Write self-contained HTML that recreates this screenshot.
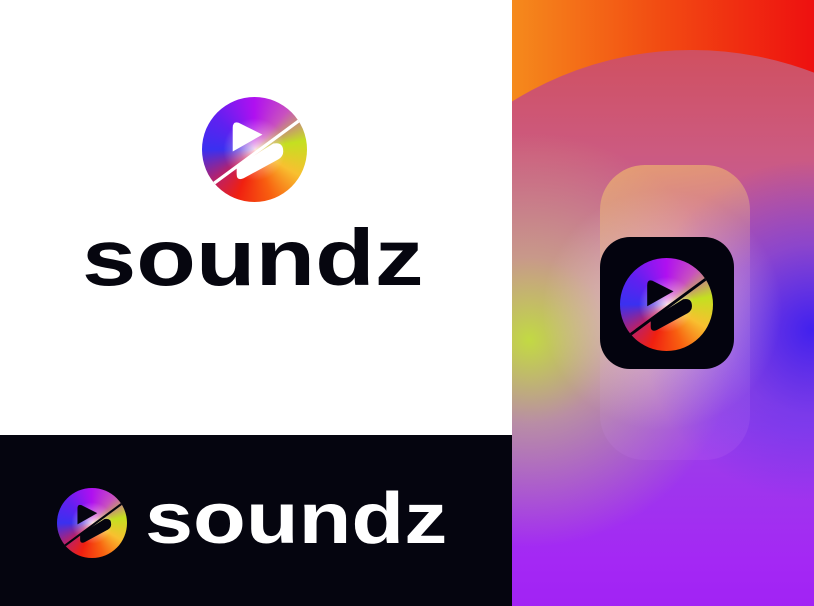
<!DOCTYPE html>
<html><head><meta charset="utf-8"><style>
*{margin:0;padding:0}
html,body{width:814px;height:606px;overflow:hidden}
body{position:relative;background:#fff;font-family:"Liberation Sans",sans-serif}
.logo{position:absolute;border-radius:50%;overflow:hidden;
background:radial-gradient(circle at 50% 50%,rgba(255,235,240,.9) 0,rgba(255,220,230,.4) 20%,rgba(255,255,255,0) 42%),
conic-gradient(from 0deg,#b010f0 0deg,#c850c0 40deg,#c4e020 80deg,#f8c030 120deg,#f86010 160deg,#f02010 200deg,#c02060 230deg,#3a30f0 270deg,#6020f0 310deg,#b010f0 360deg)}
.logo svg{position:absolute;left:0;top:0;width:100%;height:100%}
.word{position:absolute;font-weight:bold;white-space:nowrap;transform-origin:left top;line-height:1}
.band{position:absolute;left:0;top:435px;width:512px;height:171px;background:#05050f}
.right{position:absolute;left:512px;top:0;width:302px;height:606px;overflow:hidden;
background:linear-gradient(180deg,#c0408a 0%,#a030e0 60%,#9010f8 100%)}
.right div{position:absolute;border-radius:50%}
</style></head><body>
<div class="logo" style="left:202px;top:97px;width:105px;height:105px">
<svg viewBox="0 0 106 106"><polygon points="0,94 106,16 106,20 0,98" fill="#fff"/>
<path d="M31,31 Q31,24 37,26 L61,38 L31,55 Z" fill="#fff"/>
<path d="M35,70 L72,47 Q82,45 82,55 Q82,60 77,63 L42,82 Q35,85 35,78 Z" fill="#fff"/></svg></div>
<div class="word" style="left:82px;top:218px;font-size:80px;color:#06060f;transform:scaleX(1.22)">soundz</div>
<div class="band"></div>
<div class="logo" style="left:57px;top:488px;width:70px;height:70px">
<svg viewBox="0 0 106 106"><polygon points="0,94 106,16 106,20 0,98" fill="#05050f"/>
<path d="M31,31 Q31,24 37,26 L61,38 L31,55 Z" fill="#05050f"/>
<path d="M35,70 L72,47 Q82,45 82,55 Q82,60 77,63 L42,82 Q35,85 35,78 Z" fill="#05050f"/></svg></div>
<div class="word" style="left:145px;top:483px;font-size:72px;color:#fff;transform:scaleX(1.2)">soundz</div>
<div class="right">
<div style="left:0;top:0;width:302px;height:200px;border-radius:0;background:linear-gradient(90deg,#f58a1c 0%,#f24a12 50%,#ee1010 100%)"></div>
<div style="left:-160px;top:50px;width:680px;height:680px;background:linear-gradient(180deg,#d05060 0%,#cc5a80 15%,#b858b8 35%,#9a40e8 55%,#a428f4 75%,#9a14f6 100%)"></div>
<div style="left:-190px;top:110px;width:460px;height:460px;background:radial-gradient(circle closest-side at 45% 50%,rgba(195,225,60,.95) 0,rgba(210,205,110,.55) 40%,rgba(220,150,150,0) 100%)"></div>
<div style="left:130px;top:160px;width:340px;height:340px;background:radial-gradient(circle closest-side,rgba(60,30,240,.95) 0,rgba(90,50,240,.5) 50%,rgba(120,60,240,0) 100%)"></div>
<div style="left:30px;top:190px;width:240px;height:240px;background:radial-gradient(circle closest-side,rgba(255,235,240,.55) 0,rgba(255,220,240,0) 100%)"></div>
<div style="left:88px;top:165px;width:150px;height:295px;border-radius:45px;background:linear-gradient(170deg,rgba(250,210,100,.55) 0%,rgba(240,190,200,.15) 40%,rgba(220,180,240,.1) 70%,rgba(200,120,240,.15) 100%)"></div>
<div style="left:88px;top:237px;width:134px;height:132px;border-radius:30px;background:#03030e"></div>
<div class="logo" style="left:108px;top:258px;width:93px;height:93px;background:radial-gradient(circle at 50% 50%,rgba(255,235,240,.9) 0,rgba(255,220,230,.4) 20%,rgba(255,255,255,0) 42%),conic-gradient(from 0deg,#b010f0 0deg,#c850c0 40deg,#c4e020 80deg,#f8c030 120deg,#f86010 160deg,#f02010 200deg,#c02060 230deg,#3a30f0 270deg,#6020f0 310deg,#b010f0 360deg)">
<svg viewBox="0 0 106 106"><polygon points="0,94 106,16 106,20 0,98" fill="#03030e"/>
<path d="M31,31 Q31,24 37,26 L61,38 L31,55 Z" fill="#03030e"/>
<path d="M35,70 L72,47 Q82,45 82,55 Q82,60 77,63 L42,82 Q35,85 35,78 Z" fill="#03030e"/></svg></div>
</div>
</body></html>
